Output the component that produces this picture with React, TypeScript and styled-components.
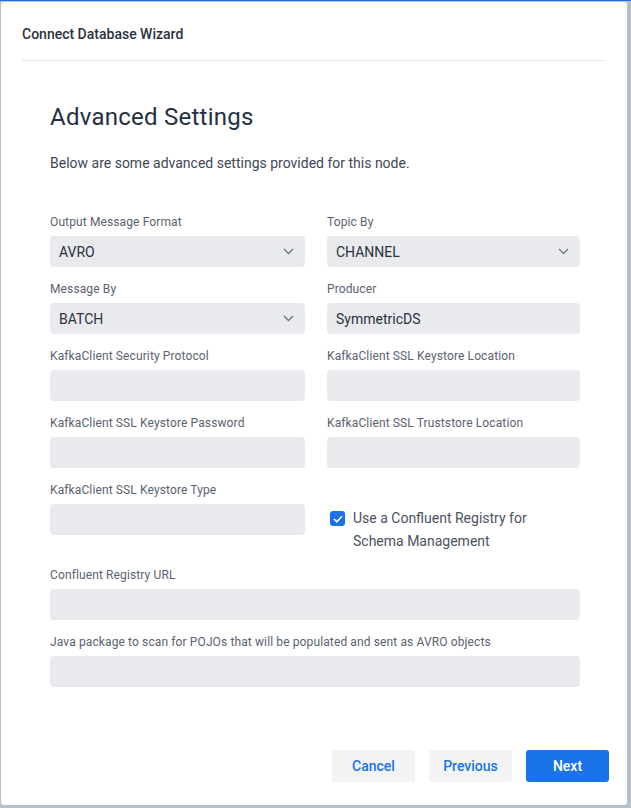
import * as React from "react"
import styled, { createGlobalStyle } from "styled-components"

const GlobalStyle = createGlobalStyle`
  html, body {
    margin: 0;
    padding: 0;
    background: #b9bfc7;
    font-family: Roboto, "Liberation Sans", Arial, sans-serif;
  }
  * { box-sizing: border-box; }
`

const Page = styled.div`
  width: 631px;
  height: 808px;
  padding: 1px 4px 3px 1px;
  border-top: 1px solid #1a6fd8;
`

const Modal = styled.div`
  width: 626px;
  height: 803px;
  background: #fff;
  border-radius: 3px;
  display: flex;
  flex-direction: column;
`

const Header = styled.div`
  margin: 0 22px 0 21px;
  height: 59px;
  padding-top: 24px;
  border-bottom: 1px solid #e3e5e9;
  font-size: 14px;
  font-weight: 500;
  color: #2b3240;
`

const Body = styled.div`
  flex: 1;
  padding: 40px 48px 0 49px;
`

const Title = styled.h1`
  margin: 0;
  font-size: 24px;
  font-weight: 400;
  letter-spacing: 0.25px;
  color: #243042;
  line-height: 32px;
`

const Desc = styled.p`
  margin: 20px 0 0;
  font-size: 14px;
  color: #3f4756;
  line-height: 20px;
`

const Grid = styled.div`
  margin-top: 42px;
  display: grid;
  grid-template-columns: 255px 253px;
  column-gap: 22px;
  row-gap: 15px;
`

const Field = styled.div<{ $full?: boolean }>`
  display: flex;
  flex-direction: column;
  grid-column: ${p => (p.$full ? "1 / span 2" : "auto")};
`

const Label = styled.label`
  font-size: 12px;
  letter-spacing: 0.12px;
  color: #5a6270;
  line-height: 14px;
  margin-bottom: 7px;
`

const Box = styled.div`
  height: 31px;
  background: #e8eaee;
  border-radius: 4px;
  display: flex;
  align-items: center;
  justify-content: space-between;
  padding: 0 11px 0 9px;
  font-size: 14px;
  color: #2b3240;
`

const CheckRow = styled.div`
  display: flex;
  align-items: flex-start;
  padding: 24px 0 0 3px;
  gap: 8px;
`

const CheckBox = styled.span`
  width: 15px;
  height: 15px;
  margin-top: 4px;
  border-radius: 3px;
  background: #1a73e8;
  display: flex;
  align-items: center;
  justify-content: center;
  flex-shrink: 0;
`

const CheckText = styled.span`
  font-size: 14px;
  line-height: 23px;
  color: #4a5262;
`

const Footer = styled.div`
  display: flex;
  justify-content: flex-end;
  gap: 14px;
  padding: 0 18px 23px 0;
`

const Button = styled.button<{ $primary?: boolean }>`
  width: 83px;
  height: 32px;
  border: none;
  border-radius: 3px;
  font-family: inherit;
  font-size: 14px;
  font-weight: 500;
  background: ${p => (p.$primary ? "#1a73e8" : "#f2f3f5")};
  color: ${p => (p.$primary ? "#fff" : "#1a73e8")};
`

const Chevron = () => (
  <svg width="11" height="7" viewBox="0 0 11 7" fill="none">
    <path d="M1 1l4.5 4.5L10 1" stroke="#6b7280" strokeWidth="1.3" />
  </svg>
)

const Select = ({ value }: { value: string }) => (
  <Box>
    <span>{value}</span>
    <Chevron />
  </Box>
)

export default function App() {
  return (
    <>
      <GlobalStyle />
      <Page>
        <Modal>
          <Header>Connect Database Wizard</Header>
          <Body>
            <Title>Advanced Settings</Title>
            <Desc>Below are some advanced settings provided for this node.</Desc>
            <Grid>
              <Field>
                <Label>Output Message Format</Label>
                <Select value="AVRO" />
              </Field>
              <Field>
                <Label>Topic By</Label>
                <Select value="CHANNEL" />
              </Field>
              <Field>
                <Label>Message By</Label>
                <Select value="BATCH" />
              </Field>
              <Field>
                <Label>Producer</Label>
                <Box>SymmetricDS</Box>
              </Field>
              <Field>
                <Label>KafkaClient Security Protocol</Label>
                <Box />
              </Field>
              <Field>
                <Label>KafkaClient SSL Keystore Location</Label>
                <Box />
              </Field>
              <Field>
                <Label>KafkaClient SSL Keystore Password</Label>
                <Box />
              </Field>
              <Field>
                <Label>KafkaClient SSL Truststore Location</Label>
                <Box />
              </Field>
              <Field>
                <Label>KafkaClient SSL Keystore Type</Label>
                <Box />
              </Field>
              <CheckRow>
                <CheckBox>
                  <svg width="10" height="8" viewBox="0 0 10 8" fill="none">
                    <path d="M1 4l2.8 2.8L9 1.2" stroke="#fff" strokeWidth="1.6" />
                  </svg>
                </CheckBox>
                <CheckText>
                  Use a Confluent Registry for
                  <br />
                  Schema Management
                </CheckText>
              </CheckRow>
              <Field $full>
                <Label>Confluent Registry URL</Label>
                <Box />
              </Field>
              <Field $full>
                <Label>Java package to scan for POJOs that will be populated and sent as AVRO objects</Label>
                <Box />
              </Field>
            </Grid>
          </Body>
          <Footer>
            <Button>Cancel</Button>
            <Button>Previous</Button>
            <Button $primary>Next</Button>
          </Footer>
        </Modal>
      </Page>
    </>
  )
}
